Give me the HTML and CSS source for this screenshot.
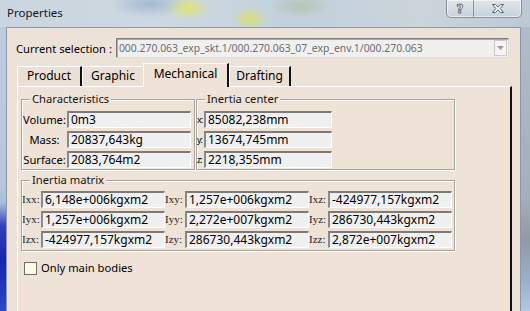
FILE: index.html
```html
<!DOCTYPE html>
<html lang="en">
<head>
  <meta charset="UTF-8" />
  <title>Properties</title>
  <link rel="stylesheet" href="styles.css">
</head>
<body>
  <div class="window">
    <div class="titlebar">
      <span class="title">Properties</span>
      <div class="caption-buttons">
        <button class="cap-btn help">?</button>
        <button class="cap-btn close">
          <svg width="14" height="11" viewBox="0 0 14 11">
            <path d="M1.5 1.5h3l2.5 2.6 2.5-2.6h3L9.2 5.5l3.3 4h-3L7 6.9 4.5 9.5h-3l3.3-4z" fill="#f4f6f8" stroke="#5a6470" stroke-width="1" stroke-linejoin="round"/>
          </svg>
        </button>
      </div>
    </div>

    <div class="frame-body">
      <div class="frame-side left"></div>

      <div class="client">
        <div class="selection-row">
          <span class="selection-label">Current selection :</span>
          <div class="combo">
            <span class="combo-text">000.270.063_exp_skt.1/000.270.063_07_exp_env.1/000.270.063</span>
            <span class="combo-arrow">
              <svg width="7" height="4" viewBox="0 0 7 4"><path d="M0 0h7L3.5 4z" fill="#9a9a9a"/></svg>
            </span>
          </div>
        </div>

        <div class="tabs">
          <div class="tab tab-product">Product</div>
          <div class="tab tab-graphic">Graphic</div>
          <div class="tab tab-mechanical active">Mechanical</div>
          <div class="tab tab-drafting">Drafting</div>
        </div>

        <div class="tab-panel">
          <div class="top-groups">
            <fieldset class="group chars">
              <legend>Characteristics</legend>
              <div class="rows">
                <span class="row-label">Volume:</span><div class="field">0m3</div>
                <span class="row-label">Mass:</span><div class="field">20837,643kg</div>
                <span class="row-label">Surface:</span><div class="field">2083,764m2</div>
              </div>
            </fieldset>
            <fieldset class="group center">
              <legend>Inertia center</legend>
              <div class="rows">
                <span class="axis-label">x:</span><div class="field">85082,238mm</div>
                <span class="axis-label">y:</span><div class="field">13674,745mm</div>
                <span class="axis-label">z:</span><div class="field">2218,355mm</div>
              </div>
            </fieldset>
          </div>

          <fieldset class="group matrix">
            <legend>Inertia matrix</legend>
            <div class="rows">
              <span class="m-label">Ixx:</span><div class="field">6,148e+006kgxm2</div>
              <span class="m-label">Ixy:</span><div class="field">1,257e+006kgxm2</div>
              <span class="m-label">Ixz:</span><div class="field">-424977,157kgxm2</div>
              <span class="m-label">Iyx:</span><div class="field">1,257e+006kgxm2</div>
              <span class="m-label">Iyy:</span><div class="field">2,272e+007kgxm2</div>
              <span class="m-label">Iyz:</span><div class="field">286730,443kgxm2</div>
              <span class="m-label">Izx:</span><div class="field">-424977,157kgxm2</div>
              <span class="m-label">Izy:</span><div class="field">286730,443kgxm2</div>
              <span class="m-label">Izz:</span><div class="field">2,872e+007kgxm2</div>
            </div>
          </fieldset>

          <label class="check">
            <span class="check-box"></span>
            Only main bodies
          </label>
        </div>
      </div>

      <div class="frame-side right"></div>
    </div>
  </div>
</body>
</html>
```

FILE: styles.css
```css
* { margin: 0; padding: 0; box-sizing: border-box; }
body {
  width: 530px;
  height: 311px;
  overflow: hidden;
  font-family: 'Noto Sans', sans-serif;
  font-size: 12px;
  color: #000;
  background: #9fb3c8;
}
.window {
  display: flex;
  flex-direction: column;
  height: 311px;
}

/* title bar (glass) */
.titlebar {
  height: 27px;
  flex-shrink: 0;
  display: flex;
  justify-content: space-between;
  align-items: flex-start;
  background:
    radial-gradient(ellipse 22px 12px at 188px 8px, rgba(226,230,110,0.9), rgba(226,230,110,0) 100%),
    radial-gradient(ellipse 18px 12px at 250px 18px, rgba(222,226,96,0.85), rgba(222,226,96,0) 100%),
    radial-gradient(ellipse 40px 14px at 150px 4px, rgba(150,180,205,0.8), rgba(150,180,205,0) 100%),
    radial-gradient(ellipse 30px 12px at 300px 6px, rgba(170,190,150,0.6), rgba(170,190,150,0) 100%),
    radial-gradient(ellipse 60px 16px at 420px 10px, rgba(205,212,218,0.9), rgba(205,212,218,0) 100%),
    linear-gradient(to right, #c9d5e0 0%, #cfd8df 30%, #c2d1dd 55%, #cbd4db 80%, #bcc8d4 100%);
}
.title {
  padding: 5px 0 0 7px;
  line-height: 16px;
  font-size: 11.5px;
  color: #141414;
}
.caption-buttons {
  display: flex;
  height: 18px;
  margin-right: 8px;
  border: 1px solid rgba(70,80,92,0.55);
  border-top: none;
  border-radius: 0 0 5px 5px;
  overflow: hidden;
  background: linear-gradient(#dfe5ea, #c8d2dc);
  box-shadow: inset 0 0 0 1px rgba(255,255,255,0.55);
}
.cap-btn {
  border: none;
  background: none;
  display: flex;
  align-items: center;
  justify-content: center;
}
.cap-btn.help {
  width: 27px;
  border-right: 1px solid rgba(70,80,92,0.5);
  font-family: 'DejaVu Sans', sans-serif;
  font-weight: bold;
  font-size: 12px;
  color: #f4f6f8;
  -webkit-text-stroke: 0.8px #5a6470;
}
.cap-btn.close {
  width: 47px;
}

/* frame */
.frame-body {
  flex: 1;
  display: flex;
  min-height: 0;
}
.frame-side.left {
  width: 6px;
  background: linear-gradient(#bccde0 0%, #b4c7dc 55%, #a9bedc 62%, #3040c0 70%, #1424b4 82%, #2a48c8 100%);
}
.frame-side.right {
  width: 9px;
  background: linear-gradient(#b0bcc8 0%, #a3afbb 60%, #8f9aa4 75%, #9cb0cf 90%, #b4c8e6 100%);
}
.client {
  flex: 1;
  display: flex;
  flex-direction: column;
  background: #ede2d8;
  border: 1px solid #8c97a3;
  border-bottom: none;
  padding-top: 10px;
}

/* selection combo */
.selection-row {
  display: flex;
  align-items: center;
  gap: 4px;
  height: 20px;
  margin: 0 11px 0 9px;
}
.selection-label {
  white-space: nowrap;
  font-size: 11.2px;
}
.combo {
  flex: 1;
  height: 20px;
  display: flex;
  align-items: center;
  background: #f0f0f0;
  border: 1px solid;
  border-color: #7e7e7e #dedede #dedede #7e7e7e;
  box-shadow: inset 1px 1px 0 #ababab;
  padding-left: 2px;
}
.combo-text {
  flex: 1;
  font-size: 10.4px;
  color: #6d6d6d;
  white-space: nowrap;
  overflow: hidden;
}
.combo-arrow {
  width: 13px;
  height: 16px;
  margin-right: 1px;
  display: flex;
  align-items: center;
  justify-content: center;
  border: 1px solid #c9c9c9;
  background: #f4f4f4;
}

/* tabs */
.tabs {
  display: flex;
  align-items: flex-end;
  height: 23px;
  margin: 5px 0 0 10px;
}
.tab {
  height: 20px;
  line-height: 18px;
  text-align: center;
  background: #ebe0d5;
  border-top: 1px solid #fff;
  border-left: 1px solid #fff;
  border-right: 2px solid #111;
}
.tab-product { width: 65px; }
.tab-graphic { width: 61px; border-right: none; }
.tab-mechanical { width: 86px; }
.tab-drafting { width: 62px; }
.tab.active {
  height: 24px;
  margin-bottom: -1px;
  line-height: 20px;
  background: #eee3d6;
  position: relative;
  z-index: 1;
}

/* panel */
.tab-panel {
  flex: 1;
  margin: 0 8px 0 10px;
  padding: 5px 0 0 3px;
  background: #eee3d6;
  border-top: 1px solid #fff;
  border-left: 1px solid #fff;
  border-right: 2px solid #111;
}
.top-groups {
  display: flex;
  gap: 1px;
  margin-bottom: 3px;
}
.group {
  border: 1px solid #a9a49e;
  box-shadow: 1px 1px 0 #fff, inset 1px 1px 0 #fff;
}
.group legend {
  margin-left: 8px;
  padding: 0 2px;
  line-height: 14px;
  font-size: 11.2px;
  background: #eee3d6;
  color: #141414;
}
.rows {
  display: grid;
  row-gap: 3px;
  grid-auto-rows: 17px;
}
.chars {
  width: 174px;
  padding: 5px 2px 1px 0;
}
.chars .rows {
  grid-template-columns: 45px 124px;
}
.center {
  width: 259px;
  padding: 5px 1px 1px 0;
}
.center .rows {
  grid-template-columns: 7px 128px;
}
.matrix {
  width: 434px;
  padding: 4px 1px 2px 0;
}
.matrix .rows {
  grid-template-columns: 19px 124px 20px 124px 19px 124px;
}
.row-label {
  text-align: center;
  line-height: 17px;
  font-size: 11.2px;
  white-space: nowrap;
}
.axis-label {
  line-height: 17px;
  font-size: 9px;
  letter-spacing: -1px;
  white-space: nowrap;
}
.m-label {
  font-family: 'Liberation Serif', serif;
  font-size: 11px;
  line-height: 17px;
  color: #222;
  white-space: nowrap;
}
.field {
  background: #f0f0f0;
  border-top: 2px solid #7b7b7b;
  border-left: 2px solid #8a8a8a;
  border-right: 1px solid #fff;
  border-bottom: 1px solid #fff;
  padding-left: 2px;
  line-height: 14px;
  white-space: nowrap;
  overflow: hidden;
}

/* checkbox */
.check {
  display: flex;
  align-items: center;
  gap: 4px;
  margin: 10px 0 0 3px;
  line-height: 14px;
  font-size: 11.2px;
}
.check-box {
  width: 13px;
  height: 13px;
  border: 1px solid #6f6f6f;
  background: #fdfbe6;
}
```
